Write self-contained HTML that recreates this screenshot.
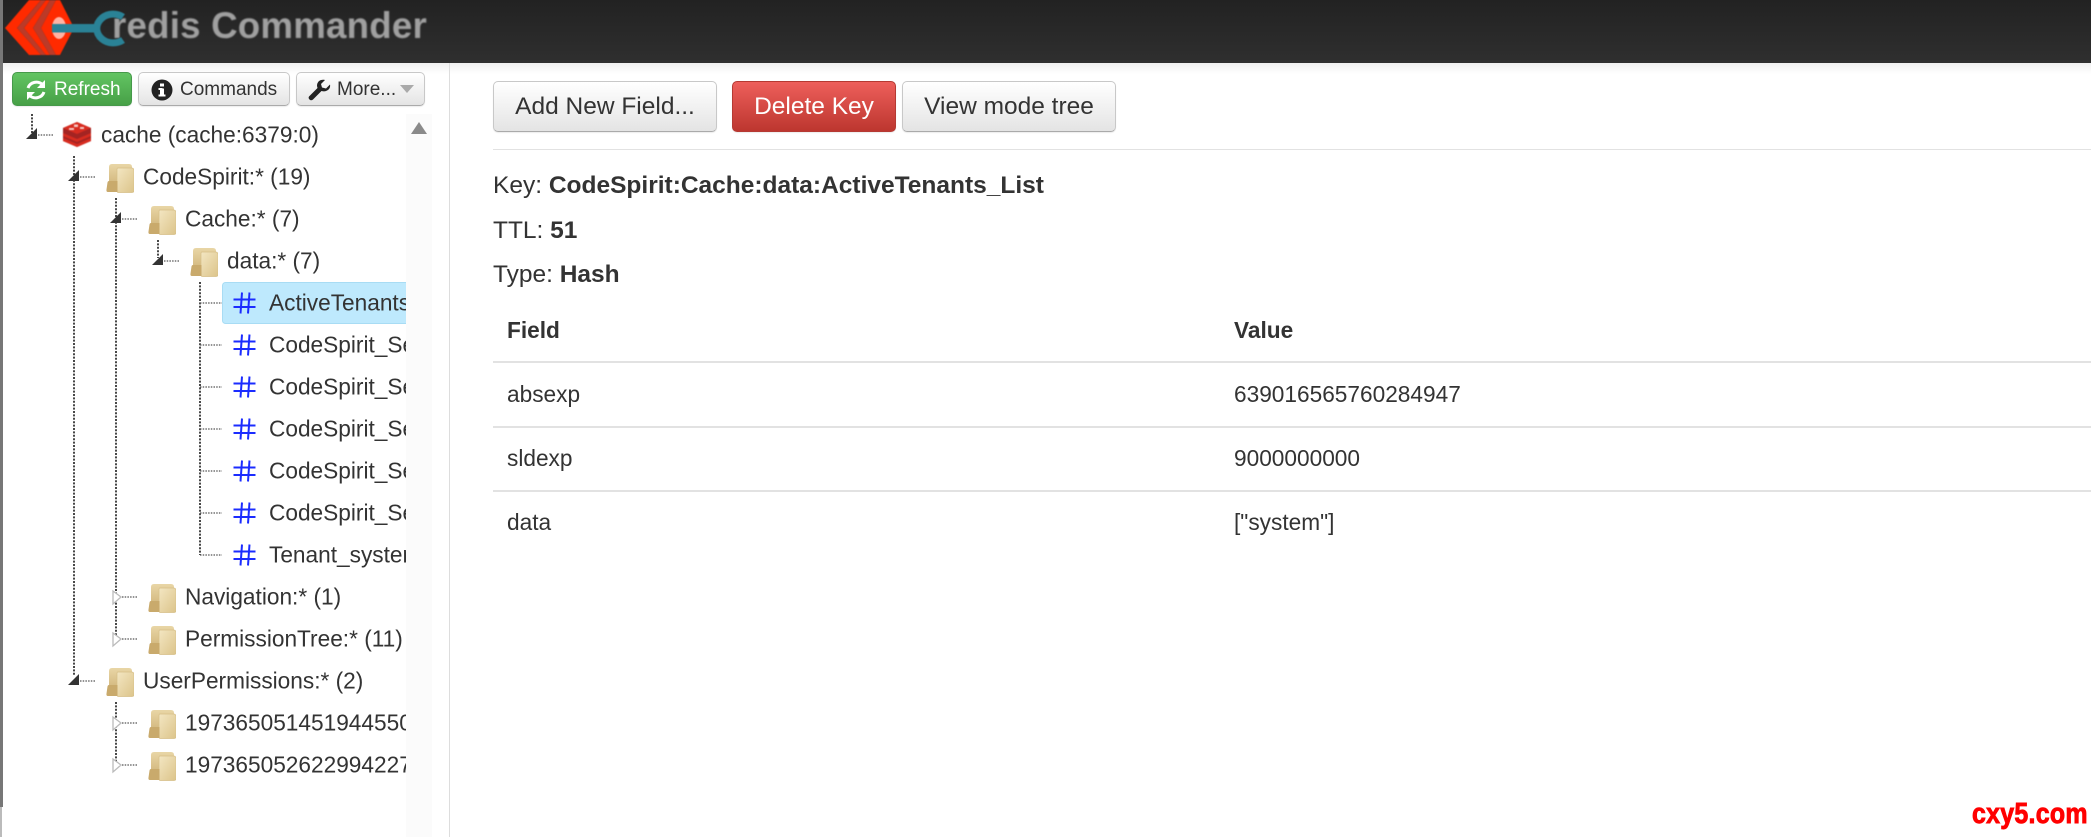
<!DOCTYPE html>
<html><head><meta charset="utf-8"><title>redis Commander</title>
<style>
html,body{margin:0;padding:0;background:#fff}
body{width:2091px;height:837px;position:relative;overflow:hidden;font-family:"Liberation Sans",sans-serif;color:#333}
.a{position:absolute;white-space:nowrap}
#hdr{left:0;top:0;width:2091px;height:63px;background:linear-gradient(#222,#2f2f2f)}
#shade{left:0;top:63px;width:2091px;height:11px;background:linear-gradient(#efefef,#fff)}
#strip{left:0;top:0;width:3px;height:807px;background:#777}
#strip2{left:0;top:807px;width:2px;height:30px;background:#bbb}
#sep{left:449px;top:63px;width:1px;height:774px;background:#ddd}
#track{left:406px;top:114px;width:26px;height:723px;background:#fbfbfb}
#brand{left:112px;top:5px;font-size:36.7px;font-weight:bold;color:#a0a0a0;filter:blur(.9px);letter-spacing:.2px}
.btn{box-sizing:border-box;border:1px solid #c8c8c8;border-bottom-color:#aaa;border-radius:5px;background:linear-gradient(#fff,#e4e4e4);text-align:center;box-shadow:0 1px 1px rgba(0,0,0,.08)}
.sm{top:72px;height:34px;font-size:19px;line-height:33px;color:#333;text-align:left}
.lg{top:81px;height:51px;font-size:24.5px;line-height:49px;color:#333}
.t{font-size:22.67px;line-height:26px;color:#333;height:26px;transform:translateY(-13.5px);filter:blur(.25px)}
.info{font-size:24.5px;line-height:30px;left:493px;color:#333}
.cell{font-size:22.67px;line-height:30px;color:#333}
.ln{left:493px;width:1598px;height:2px;background:#e2e2e2}
#clip{left:0;top:114px;width:406px;height:723px;overflow:hidden}
#wm{left:1972px;top:798px;font-size:29px;font-weight:bold;color:#f00;-webkit-text-stroke:.9px #f00;transform:scaleX(.86);transform-origin:left top;letter-spacing:.3px}
</style></head><body>
<svg width="0" height="0" style="position:absolute"><defs>
<linearGradient id="fg" x1="0" y1="0" x2="1" y2="1"><stop offset="0" stop-color="#f3e6c2"/><stop offset="1" stop-color="#dcc48a"/></linearGradient>
<linearGradient id="fb" x1="0" y1="0" x2="0" y2="1"><stop offset="0" stop-color="#e9d6a6"/><stop offset="1" stop-color="#cdb074"/></linearGradient>
<symbol id="folder" viewBox="0 0 28 30">
<path d="M6 1h17q3 0 3 3v22H3V4q0-3 3-3z" fill="url(#fb)"/>
<path d="M11.500 5h14q2.500 0 2.500 2.500v20q0 2-2 2H12.500q-1.500 0-1.500-1.500V6z" fill="url(#fg)" stroke="#d6bf88" stroke-width=".7"/>
<path d="M3 18h8.500v11H2q-2 0-1.500-2.500l1-7q.3-1.500 1.500-1.500z" fill="#c9aa6c"/>
</symbol>
<symbol id="hash" viewBox="0 0 23 22">
<g stroke="#1b2cff" stroke-width="2" fill="none"><path d="M9 0.500 7.500 21.500M16.500 0.500 15 21.500M0.500 7.500h22M0.500 15h22"/></g>
</symbol>
</defs></svg>

<div class="a" id="hdr"></div>
<div class="a" id="shade"></div>
<div class="a" id="strip"></div>
<div class="a" id="strip2"></div>
<div class="a" id="sep"></div>
<div class="a" id="track"></div>

<div class="a" id="brand">redis Commander</div>
<svg class="a" style="left:0;top:0;filter:blur(.5px)" width="130" height="63" viewBox="0 0 130 63">
<path d="M5 28 29 0H41L17 28 41 55H29z" fill="#ff2a00"/>
<path d="M17 28 41 0H46L24 28 46 55H41z" fill="#bb3a28"/>
<path d="M24 28 46 0H50L33 28 50 55H46z" fill="#ff2a00"/>
<path d="M33 28 50 0H56L41 28 56 55H50z" fill="#bb3a28"/>
<path d="M41 28 56 0H60L74 28 60 55H56z" fill="#ff2a00"/>
<ellipse cx="59" cy="28" rx="7" ry="11" fill="#ffb3a4"/>
<rect x="52" y="24" width="42" height="8.500" fill="#2a8296"/>
<path d="M123 17C117 13 108 13 102 18 95 24 95 33 102 39 108 44 117 44 123 40" fill="none" stroke="#2a8296" stroke-width="7"/>
</svg>

<div class="a btn sm" style="left:12px;width:120px;background:linear-gradient(#62c462,#47a047);border-color:#46994a;color:#fff">
<svg class="a" style="left:12px;top:6px" width="22" height="22" viewBox="0 0 22 22" fill="none" stroke="#fff" stroke-width="3"><path d="M3 9C5 3 13 1 18 6"/><path d="M19 13C17 19 9 21 4 16"/><path d="M20 1v8h-8z" fill="#fff" stroke="none"/><path d="M2 21v-8h8z" fill="#fff" stroke="none"/></svg>
<span class="a" style="left:41px;top:0">Refresh</span></div>
<div class="a btn sm" style="left:138px;width:152px">
<svg class="a" style="left:12px;top:6px" width="22" height="22" viewBox="0 0 22 22"><circle cx="11" cy="11" r="10.500" fill="#222"/><rect x="9" y="9.500" width="4" height="7" fill="#fff"/><rect x="7.500" y="15.500" width="7" height="2" fill="#fff"/><rect x="7.500" y="9" width="4" height="2" fill="#fff"/><rect x="9" y="4.500" width="4" height="3" fill="#fff"/></svg>
<span class="a" style="left:41px;top:0">Commands</span></div>
<div class="a btn sm" style="left:296px;width:129px">
<svg class="a" style="left:11px;top:6px" width="23" height="22" viewBox="0 0 23 22"><path d="M22 5.500 18 9.500 14 8.500 13 5 17 1C13 0 9 2 9 7L9.500 9 1 17.500Q0 19 1.500 20.500T5 20.500L13.500 12C18.500 13.500 23 10 22 5.500z" fill="#222"/></svg>
<span class="a" style="left:40px;top:0">More...</span>
<svg class="a" style="left:103px;top:12px" width="14" height="8"><path d="M0 0h14L7 8z" fill="#aaa"/></svg></div>

<svg class="a" style="left:411px;top:122px" width="16" height="12"><path d="M0 12 8 0 16 12z" fill="#8a8a8a"/></svg>

<div class="a" id="clip">
<svg class="a" style="left:0;top:-114px" width="406" height="837" viewBox="0 0 406 837">
<g stroke="#333" stroke-width="1.800" stroke-dasharray="2 1.400" fill="none">
<path d="M32 114V135M74 156V676M116 198V640M158 240V258M200 282V555M116 702V765"/>
</g>
<g stroke="#555" stroke-width="1.300" stroke-dasharray="1.500 1.200" fill="none">
<path d="M38 135H54M80 177H96M122 219H138M164 261H180M200 303H222M200 345H222M200 387H222M200 429H222M200 471H222M200 513H222M200 555H222M122 597H138M122 639H138M80 681H96M122 723H138M122 765H138"/>
</g>
<g fill="#333">
<path d="M26 139 37 128V139zM68 181 79 170V181zM110 223 121 212V223zM152 265 163 254V265zM68 685 79 674V685z"/>
</g>
<g fill="#fff" stroke="#bbb" stroke-width="1.300">
<path d="M113 591 121 597 113 604zM113 633 121 639 113 646zM113 717 121 723 113 730zM113 759 121 765 113 772z"/>
</g>
<rect x="222.500" y="282.500" width="190" height="41" rx="3" fill="#bee9fd" stroke="#a8dcf4"/>
<!-- redis icon -->
<g style="filter:blur(.4px)">
<path d="M63 128 77 122 91 128V141L77 147 63 141z" fill="#a32422"/>
<path d="M63 128 77 122 91 128 77 134z" fill="#d82c20"/>
<path d="M63 133 77 139 91 133V136L77 142 63 136z" fill="#d82c20"/>
<path d="M63 138 77 144 91 138V141L77 147 63 141z" fill="#d82c20"/>
<path d="M74 124.500h4v2.500h-4zM80 127h4v2h-4zM69 128h5v2h-5z" fill="#f4c8c4"/>
</g>
<use href="#folder" x="106" y="163" width="28" height="30"/>
<use href="#folder" x="148" y="205" width="28" height="30"/>
<use href="#folder" x="190" y="247" width="28" height="30"/>
<use href="#folder" x="148" y="583" width="28" height="30"/>
<use href="#folder" x="148" y="625" width="28" height="30"/>
<use href="#folder" x="106" y="667" width="28" height="30"/>
<use href="#folder" x="148" y="709" width="28" height="30"/>
<use href="#folder" x="148" y="751" width="28" height="30"/>
<use href="#hash" x="233" y="292" width="23" height="22"/>
<use href="#hash" x="233" y="334" width="23" height="22"/>
<use href="#hash" x="233" y="376" width="23" height="22"/>
<use href="#hash" x="233" y="418" width="23" height="22"/>
<use href="#hash" x="233" y="460" width="23" height="22"/>
<use href="#hash" x="233" y="502" width="23" height="22"/>
<use href="#hash" x="233" y="544" width="23" height="22"/>
</svg>
<div class="a t" style="left:101px;top:21px">cache (cache:6379:0)</div>
<div class="a t" style="left:143px;top:63px">CodeSpirit:* (19)</div>
<div class="a t" style="left:185px;top:105px">Cache:* (7)</div>
<div class="a t" style="left:227px;top:147px">data:* (7)</div>
<div class="a t" style="left:269px;top:189px">ActiveTenants_List</div>
<div class="a t" style="left:269px;top:231px">CodeSpirit_Security</div>
<div class="a t" style="left:269px;top:273px">CodeSpirit_Security</div>
<div class="a t" style="left:269px;top:315px">CodeSpirit_Security</div>
<div class="a t" style="left:269px;top:357px">CodeSpirit_Security</div>
<div class="a t" style="left:269px;top:399px">CodeSpirit_Security</div>
<div class="a t" style="left:269px;top:441px">Tenant_system</div>
<div class="a t" style="left:185px;top:483px">Navigation:* (1)</div>
<div class="a t" style="left:185px;top:525px">PermissionTree:* (11)</div>
<div class="a t" style="left:143px;top:567px">UserPermissions:* (2)</div>
<div class="a t" style="left:185px;top:609px">1973650514519445504</div>
<div class="a t" style="left:185px;top:651px">1973650526229942272</div>
</div>

<div class="a btn lg" style="left:493px;width:224px">Add New Field...</div>
<div class="a btn lg" style="left:732px;width:164px;background:linear-gradient(#ee5f5b,#bd362f);border-color:#b53a33;color:#fff">Delete Key</div>
<div class="a btn lg" style="left:902px;width:214px">View mode tree</div>
<div class="a" style="left:493px;top:149px;width:1598px;height:1px;background:#e2e2e2"></div>

<div class="a info" style="top:171px">Key: <b>CodeSpirit:Cache:data:ActiveTenants_List</b></div>
<div class="a info" style="top:216px">TTL: <b>51</b></div>
<div class="a info" style="top:260px">Type: <b>Hash</b></div>

<div class="a cell" style="left:507px;top:315px"><b>Field</b></div>
<div class="a cell" style="left:1234px;top:315px"><b>Value</b></div>
<div class="a ln" style="top:361px"></div>
<div class="a cell" style="left:507px;top:379px">absexp</div>
<div class="a cell" style="left:1234px;top:379px">639016565760284947</div>
<div class="a ln" style="top:426px"></div>
<div class="a cell" style="left:507px;top:443px">sldexp</div>
<div class="a cell" style="left:1234px;top:443px">9000000000</div>
<div class="a ln" style="top:490px"></div>
<div class="a cell" style="left:507px;top:507px">data</div>
<div class="a cell" style="left:1234px;top:507px">["system"]</div>

<div class="a" id="wm">cxy5.com</div>
</body></html>
